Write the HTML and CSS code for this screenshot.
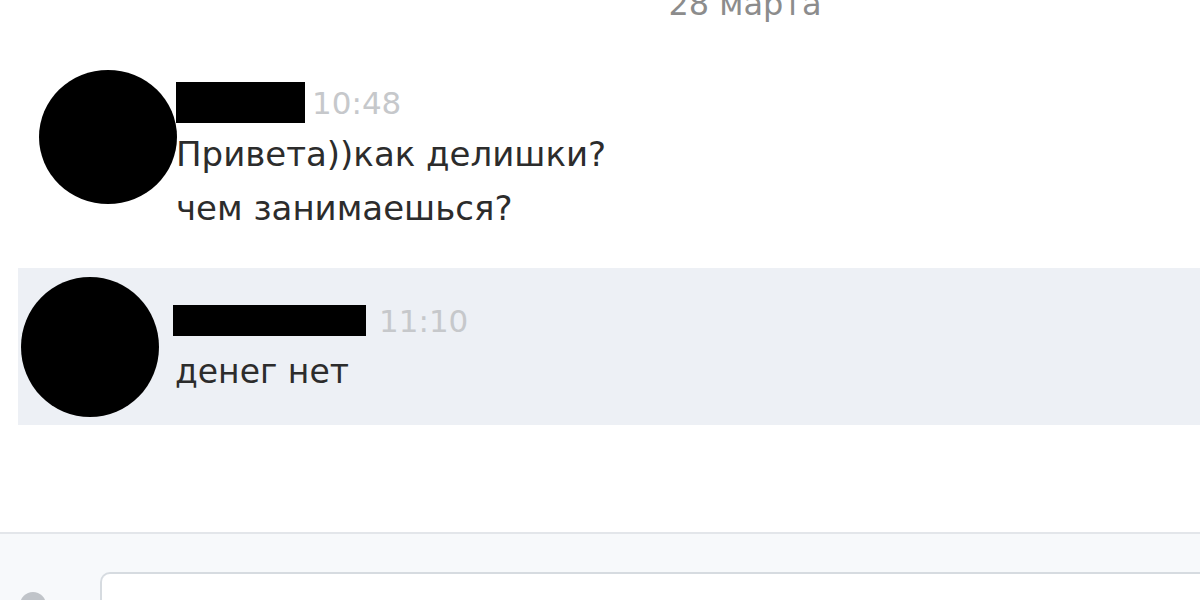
FILE: index.html
```html
<!DOCTYPE html>
<html lang="ru">
<head>
  <meta charset="UTF-8">
  <meta name="viewport" content="width=device-width, initial-scale=1.0">
  <title>Сообщения</title>
  <link rel="stylesheet" href="styles.css">
</head>
<body>
  <div class="chat">
    <div class="chat-date">28 марта</div>

    <div class="msg">
      <div class="avatar"></div>
      <div class="msg-body">
        <div class="msg-head">
          <span class="name-bar"></span>
          <span class="msg-time">10:48</span>
        </div>
        <div class="msg-text">Привета))как делишки?</div>
        <div class="msg-text">чем занимаешься?</div>
      </div>
    </div>

    <div class="msg msg-selected">
      <div class="avatar"></div>
      <div class="msg-body">
        <div class="msg-head">
          <span class="name-bar name-bar-long"></span>
          <span class="msg-time">11:10</span>
        </div>
        <div class="msg-text">денег нет</div>
      </div>
    </div>
  </div>

  <div class="composer">
    <span class="attach-icon"></span>
    <div class="composer-input"></div>
  </div>
</body>
</html>
```

FILE: styles.css
```css
:root {
  --text: #2c2c2c;
  --muted: #8c8c8c;
  --time: #c6c8cb;
  --selected: #edf0f5;
  --border: #e3e6ea;
  --composer-bg: #f7f9fb;
  --input-border: #d6dbe0;
}

body {
  margin: 0;
  font-family: "DejaVu Sans", Verdana, sans-serif;
  background: #ffffff;
  color: var(--text);
  overflow: hidden;
}

.chat {
  display: flow-root;
  height: 532px;
  border-bottom: 2px solid var(--border);
}

.chat-date {
  margin-top: -16px;
  padding-left: 290px;
  text-align: center;
  font-size: 32px;
  line-height: 40px;
  color: var(--muted);
}

.msg {
  display: flex;
  margin-top: 46px;
  padding-left: 39px;
}

.msg-selected {
  margin: 33px 0 0 18px;
  padding: 9px 0 8px 3px;
  background: var(--selected);
}

.avatar {
  width: 138px;
  height: 134px;
  flex-shrink: 0;
  border-radius: 50%;
  background: #000000;
}

.msg-selected .avatar {
  height: 140px;
}

.msg-body {
  padding-top: 12px;
  margin-left: -1px;
}

.msg-selected .msg-body {
  padding-top: 28px;
  margin-left: 16px;
}

.msg-head {
  display: flex;
  align-items: center;
  gap: 7px;
  height: 41px;
}

.name-bar {
  display: block;
  width: 129px;
  height: 41px;
  background: #000000;
}

.name-bar-long {
  width: 193px;
  height: 31px;
  margin-left: -2px;
}

.msg-selected .msg-head {
  height: 31px;
  gap: 13px;
}

.msg-time {
  font-size: 31px;
  color: var(--time);
}

.msg-text {
  margin-top: 4px;
  font-size: 34px;
  line-height: 54px;
}

.msg-text + .msg-text {
  margin-top: 0;
}

.msg-selected .msg-text {
  margin-top: 9px;
  font-size: 33px;
}

.composer {
  display: flex;
  align-items: flex-start;
  box-sizing: border-box;
  height: 66px;
  padding-top: 38px;
  overflow: hidden;
  background: var(--composer-bg);
}

.attach-icon {
  width: 26px;
  height: 26px;
  margin: 20px 0 0 20px;
  border-radius: 50%;
  background: #c0c4c9;
}

.composer-input {
  flex: 1;
  height: 60px;
  margin-left: 54px;
  background: #ffffff;
  border: 2px solid var(--input-border);
  border-right: none;
  border-radius: 10px 0 0 0;
}
```
